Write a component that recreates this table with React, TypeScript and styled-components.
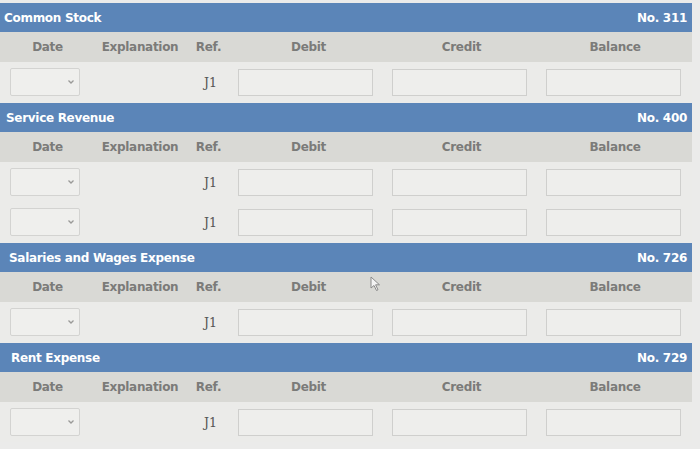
import React from "react";
import styled, { createGlobalStyle } from "styled-components";

const Global = createGlobalStyle`
  html, body { margin: 0; padding: 0; background: #e9e9e7; }
  body { font-family: "DejaVu Sans", Verdana, sans-serif; }
`;

const Page = styled.div`
  position: relative;
  width: 700px;
  height: 449px;
  overflow: hidden;
  background: #ebebea;
  padding-top: 3px;
  box-sizing: border-box;
`;

const Account = styled.section`
  width: 692px;
  margin-bottom: 1px;
  background: #eaeae8;
`;

const TitleBar = styled.div<{ $indent: number }>`
  display: flex;
  align-items: center;
  justify-content: space-between;
  height: 29px;
  padding: 0 5px 0 ${(p) => p.$indent}px;
  background: #5b85b8;
  color: #ffffff;
  font-weight: bold;
  font-size: 12px;
  letter-spacing: -0.3px;
`;

const Grid = styled.div<{ $h: number; $bg: string }>`
  display: grid;
  grid-template-columns: 95px 90px 47px 153px 153px 154px;
  height: ${(p) => p.$h}px;
  align-items: center;
  background: ${(p) => p.$bg};
`;

const ColHead = styled.div`
  text-align: center;
  color: #7b7b79;
  font-weight: bold;
  font-size: 12px;
  letter-spacing: -0.3px;
`;

const Cell = styled.div<{ $pad?: number }>`
  display: flex;
  align-items: center;
  padding-left: ${(p) => p.$pad ?? 0}px;
`;

const Select = styled.div`
  width: 70px;
  height: 28px;
  box-sizing: border-box;
  border: 1px solid #d3d3d1;
  border-radius: 2px;
  background: #efefed;
  display: flex;
  align-items: center;
  justify-content: flex-end;
  padding-right: 4px;
`;

const Ref = styled.div`
  text-align: center;
  font-family: "DejaVu Serif", Georgia, serif;
  font-size: 12.5px;
  color: #555555;
  padding-left: 4px;
`;

const Input = styled.div`
  width: 135px;
  height: 27px;
  box-sizing: border-box;
  border: 1px solid #cfcfcd;
  background: #eeeeec;
`;

const Cursor = styled.svg`
  position: absolute;
  left: 370px;
  top: 276px;
`;

const Chevron = () => (
  <svg width="8" height="6" viewBox="0 0 8 6">
    <path d="M1.5 1.5 L4 4 L6.5 1.5" fill="none" stroke="#9a9a98" strokeWidth="1.3" />
  </svg>
);

const Row = () => (
  <Grid $h={40} $bg="#ebebe9">
    <Cell $pad={10}>
      <Select>
        <Chevron />
      </Select>
    </Cell>
    <div />
    <Ref>J1</Ref>
    <Cell $pad={6}>
      <Input />
    </Cell>
    <Cell $pad={7}>
      <Input />
    </Cell>
    <Cell $pad={8}>
      <Input />
    </Cell>
  </Grid>
);

const accounts = [
  { name: "Common Stock", no: "311", rows: 1, indent: 4 },
  { name: "Service Revenue", no: "400", rows: 2, indent: 6 },
  { name: "Salaries and Wages Expense", no: "726", rows: 1, indent: 9 },
  { name: "Rent Expense", no: "729", rows: 1, indent: 11 },
];

export default function App() {
  return (
    <>
      <Global />
      <Page>
        {accounts.map((a) => (
          <Account key={a.no}>
            <TitleBar $indent={a.indent}>
              <span>{a.name}</span>
              <span>No. {a.no}</span>
            </TitleBar>
            <Grid $h={30} $bg="#d9d9d5">
              <ColHead>Date</ColHead>
              <ColHead>Explanation</ColHead>
              <ColHead>Ref.</ColHead>
              <ColHead>Debit</ColHead>
              <ColHead>Credit</ColHead>
              <ColHead>Balance</ColHead>
            </Grid>
            {Array.from({ length: a.rows }).map((_, i) => (
              <Row key={i} />
            ))}
          </Account>
        ))}
        <Cursor width="12" height="16" viewBox="0 0 12 16">
          <path d="M1 1 L1 12 L4 9.5 L6.5 14.5 L8 13.8 L5.6 8.8 L9.5 8.8 Z" fill="#f4f4f4" stroke="#8a8a8a" strokeWidth="1" />
        </Cursor>
      </Page>
    </>
  );
}
